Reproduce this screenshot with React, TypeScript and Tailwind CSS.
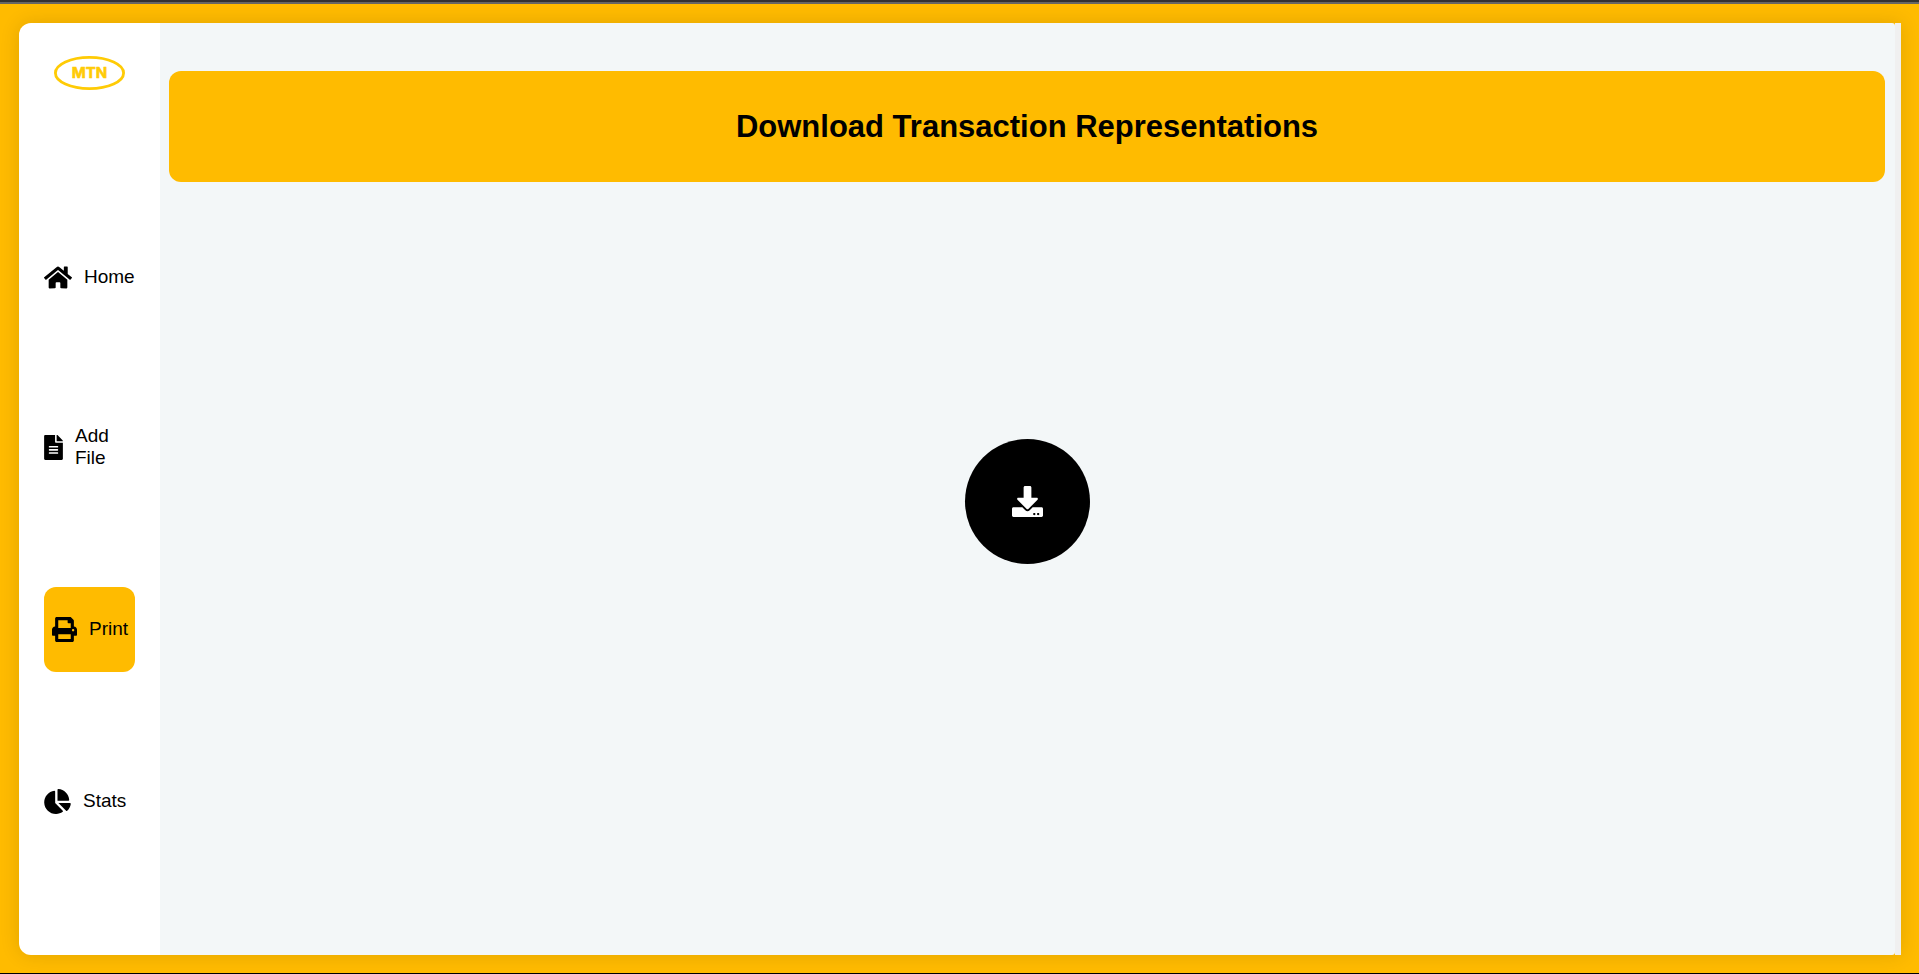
import { FaChartPie, FaDownload, FaFileAlt, FaHome, FaPrint } from "react-icons/fa";

function Logo() {
  return (
    <svg viewBox="0 0 71 34" className="h-[34px] w-[71px]" role="img" aria-label="MTN">
      <ellipse cx="35.5" cy="17" rx="34.1" ry="15.6" fill="none" stroke="#ffcb05" strokeWidth="2.8" />
      <text
        x="35.5"
        y="22.3"
        textAnchor="middle"
        fill="#ffcb05"
        stroke="#ffcb05"
        strokeWidth="0.6"
        className="font-['Inter',sans-serif] text-[15px] font-bold"
      >
        MTN
      </text>
    </svg>
  );
}

const links = [
  { label: "Home", Icon: FaHome, icon: "w-7", box: "h-[61px]" },
  { label: "Add File", Icon: FaFileAlt, icon: "w-[19px]", box: "h-[81px]" },
  { label: "Print", Icon: FaPrint, icon: "w-[25px]", box: "h-[85px] rounded-xl bg-[#ffbb00] px-2", current: true },
  { label: "Stats", Icon: FaChartPie, icon: "w-[27px]", box: "h-[61px]" },
];

function Sidebar() {
  return (
    <aside className="flex w-[141px] shrink-0 flex-col rounded-l-xl bg-white px-[25px] pt-[33px]">
      <a href="#home" className="self-center">
        <Logo />
      </a>
      <nav className="mt-[157px] flex flex-col gap-[99px]">
        {links.map(({ label, Icon, icon, box, current }) => (
          <a
            key={label}
            href={"#" + label.toLowerCase().replace(" ", "-")}
            aria-current={current ? "page" : undefined}
            className={"flex items-center gap-3 text-[19px] leading-[22px] text-black " + box}
          >
            <Icon className={"h-[25px] shrink-0 " + icon} aria-hidden="true" />
            <span className="pb-0.5">{label}</span>
          </a>
        ))}
      </nav>
    </aside>
  );
}

export default function App() {
  return (
    <div className="flex min-h-screen flex-col border-t-2 border-b border-t-[#333333] border-b-black bg-[#ffbb00] font-['Liberation_Sans',Arial,sans-serif]">
      <div className="h-0.5 bg-[#666666]" />
      <div className="mt-[19px] mr-[18px] mb-[18px] ml-[19px] flex grow rounded-l-xl shadow-[0_0_20px_rgba(0,0,0,0.12)]">
        <Sidebar />
        <main className="flex grow flex-col rounded-r-[3px] bg-[#f3f7f8] pt-12 pr-[10px] pl-[9px]">
          <header className="flex h-[111px] items-center justify-center rounded-xl bg-[#ffbb00]">
            <h1 className="text-[31px] leading-9 font-bold text-black">Download Transaction Representations</h1>
          </header>
          <div className="flex grow justify-center pt-[257px]">
            <button
              type="button"
              aria-label="Download"
              className="flex size-[125px] items-center justify-center rounded-full bg-black text-white"
            >
              <FaDownload className="size-[31px]" aria-hidden="true" />
            </button>
          </div>
        </main>
        <div className="w-1.5 shrink-0 bg-[#f0f0f0]" />
      </div>
    </div>
  );
}
